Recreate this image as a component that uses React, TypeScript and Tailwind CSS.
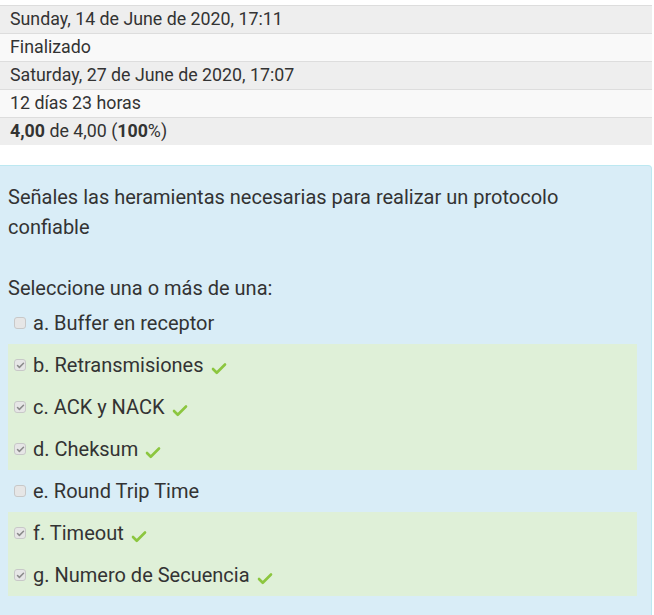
import { Check } from "lucide-react"

const summary = [
  { text: "Sunday, 14 de June de 2020, 17:11" },
  { text: "Finalizado" },
  { text: "Saturday, 27 de June de 2020, 17:07" },
  { text: "12 días 23 horas" },
]

const options = [
  { label: "a. Buffer en receptor", checked: false },
  { label: "b. Retransmisiones", checked: true },
  { label: "c. ACK y NACK", checked: true },
  { label: "d. Cheksum", checked: true },
  { label: "e. Round Trip Time", checked: false },
  { label: "f. Timeout", checked: true },
  { label: "g. Numero de Secuencia", checked: true },
]

function Box({ checked }: { checked: boolean }) {
  return (
    <span className="w-[12px] h-[12px] rounded-[3px] border border-[#c8c8c8] bg-[#e6e6e6] flex items-center justify-center shrink-0">
      {checked && <Check className="w-[9px] h-[9px] text-[#8a8a8a]" strokeWidth={4} />}
    </span>
  )
}

export default function App() {
  return (
    <div className="w-[654px] h-[615px] overflow-hidden bg-white text-[#333] font-['Roboto',sans-serif]">
      {/* Summary table */}
      <div className="pt-[5px] w-[652px]">
        {summary.map((row, i) => (
          <div
            key={i}
            className={`h-[28px] border-t border-[#dddddd] px-[10px] flex items-center text-[17.8px] ${
              i % 2 === 0 ? "bg-[#eeeeee]" : "bg-[#f9f9f9]"
            }`}
          >
            {row.text}
          </div>
        ))}
        <div className="h-[28px] border-t border-[#dddddd] px-[10px] flex items-center text-[17.8px] bg-[#eeeeee]">
          <b className="font-bold">4,00</b>&nbsp;de 4,00 (<b className="font-bold">100</b>%)
        </div>
      </div>

      {/* Question */}
      <div className="mt-[20px] w-[652px] bg-[#d9edf7] border border-l-0 border-[#bce8f1] rounded-tr-[4px] pt-[16px] pb-[20px] pl-[8px] pr-[14px]">
        <p className="text-[20px] leading-[30px]">
          Señales las heramientas necesarias para realizar un protocolo confiable
        </p>
        <p className="text-[20px] leading-[28px] mt-[32px]">Seleccione una o más de una:</p>
        <div>
          {options.map((o) => (
            <div
              key={o.label}
              className={`h-[42px] flex items-center gap-[7px] pl-[6px] text-[20px] ${
                o.checked ? "bg-[#dff0d8]" : ""
              }`}
            >
              <Box checked={o.checked} />
              <span>{o.label}</span>
              {o.checked && (
                <Check className="w-[18px] h-[18px] text-[#8cc63f] mt-[8px] -ml-[1px]" strokeWidth={3.5} />
              )}
            </div>
          ))}
        </div>
      </div>
    </div>
  )
}
